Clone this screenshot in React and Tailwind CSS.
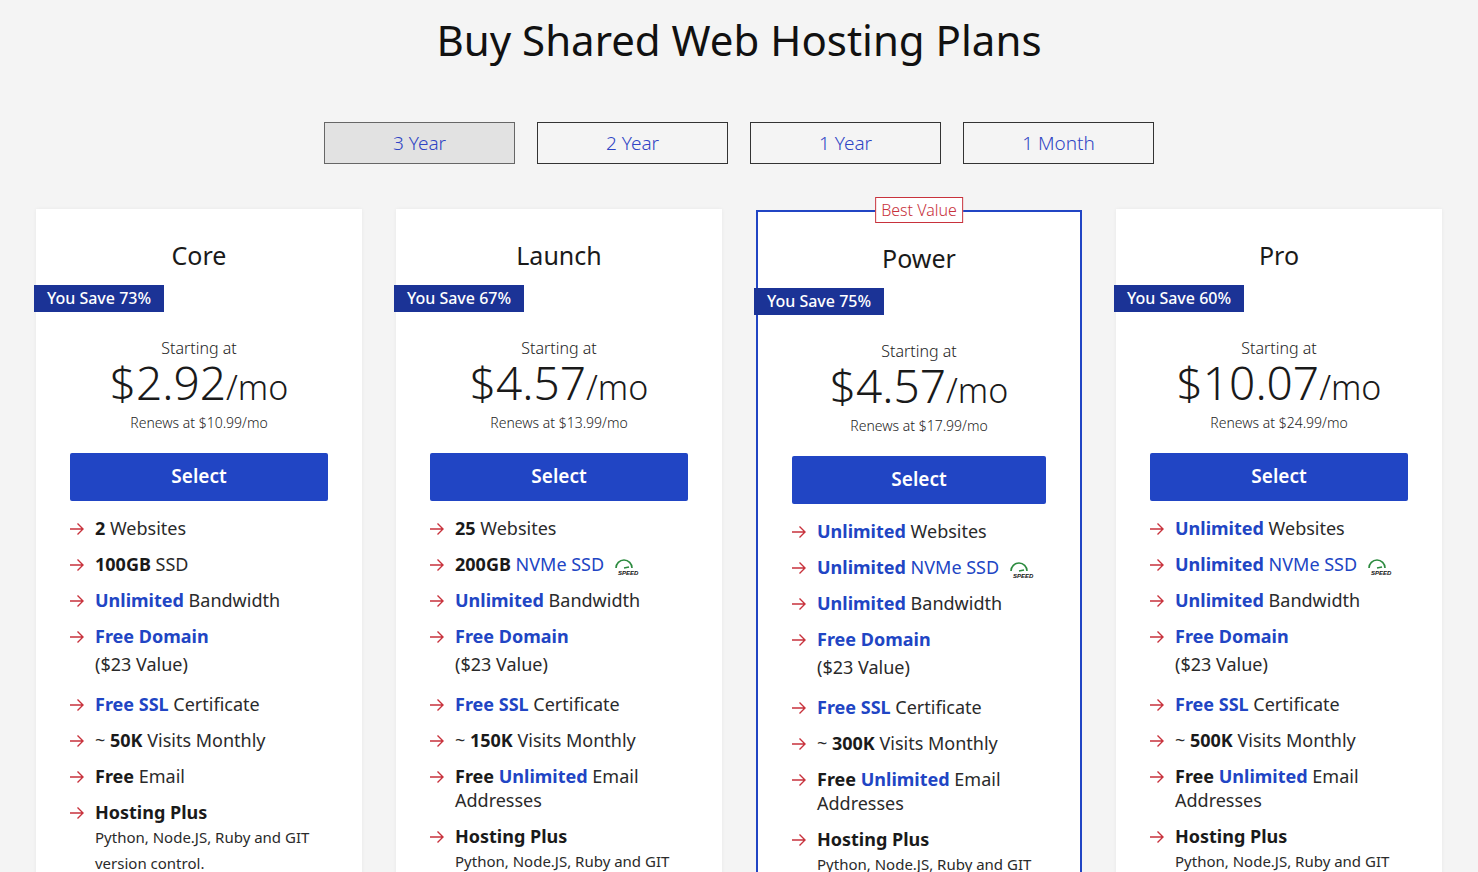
import React from 'react';

const plans = [
  { name: 'Core', save: '73%', price: '$2.92', renew: '$10.99', sites: '2', ssd: ['100GB', ' SSD', false], visits: '50K', email: 'basic', best: false },
  { name: 'Launch', save: '67%', price: '$4.57', renew: '$13.99', sites: '25', ssd: ['200GB', ' NVMe SSD', true], visits: '150K', email: 'unl', best: false },
  { name: 'Power', save: '75%', price: '$4.57', renew: '$17.99', sites: 'Unlimited', ssd: ['Unlimited', ' NVMe SSD', true], visits: '300K', email: 'unl', best: true },
  { name: 'Pro', save: '60%', price: '$10.07', renew: '$24.99', sites: 'Unlimited', ssd: ['Unlimited', ' NVMe SSD', true], visits: '500K', email: 'unl', best: false },
];

const Arrow = () => (
  <svg width="16" height="14" viewBox="0 0 16 14" className="shrink-0 mt-[6px]" fill="none" stroke="#c8323c" strokeWidth="1.4">
    <path d="M1 7h13M8.5 1.5L14 7l-5.5 5.5" />
  </svg>
);

const Speed = () => (
  <svg width="30" height="20" viewBox="0 0 30 20" className="inline-block ml-2 align-middle">
    <path d="M4 12a8 8 0 0 1 16 0" fill="none" stroke="#2b8a3e" strokeWidth="1.6" />
    <path d="M12 12l5-1" stroke="#2b8a3e" strokeWidth="1.4" />
    <text x="6" y="19" fontSize="6" fontStyle="italic" fontWeight="700" fill="#111" fontFamily="Liberation Sans">SPEED</text>
  </svg>
);

const Row = ({ children }) => (
  <li className="flex gap-[10px] items-start">
    <Arrow />
    <div>{children}</div>
  </li>
);

const B = 'font-bold text-[#2145c4]';

function Card({ p }) {
  const unl = (v) => (v === 'Unlimited' ? <span className={B}>Unlimited</span> : <span className="font-bold text-[#1a1a1a]">{v}</span>);
  return (
    <div className={`relative bg-white w-[326px] ${p.best ? 'border-2 border-[#2145c4] mt-[1px]' : 'shadow-[0_0_4px_rgba(0,0,0,0.05)]'}`}>
      {p.best && (
        <div className="absolute -top-[15px] left-1/2 -translate-x-1/2 bg-white border border-[#c8323c] text-[#c8323c] text-[16px] px-[5px] leading-[24px] font-['Inter',sans-serif] font-light">Best Value</div>
      )}
      <div className="font-['Inter',sans-serif] text-center pt-[28px] text-[25px] text-[#1a1a1a]">{p.name}</div>
      <div className={`${p.best ? '-ml-[4px]' : '-ml-[2px]'} mt-[10px] w-[130px] h-[27px] bg-[#1b3396] text-white text-[16px] font-medium font-['Inter',sans-serif] flex items-center justify-center`}>You Save {p.save}</div>
      <div className="font-['Inter',sans-serif] font-light text-center mt-[24px] text-[16px] text-[#222]">Starting at</div>
      <div className="font-['Inter',sans-serif] font-light text-center text-[#1a1a1a] leading-[44px]">
        <span className="text-[46px]">{p.price}</span><span className="text-[34px]">/mo</span>
      </div>
      <div className="font-['Inter',sans-serif] font-light text-center text-[14px] text-[#222] -mt-[2px] leading-[18px]">Renews at {p.renew}/mo</div>
      <div className="px-[34px] mt-[21px]">
        <button className="w-full h-[48px] rounded-[2px] bg-[#2145c4] text-white text-[19px] font-semibold font-['Inter',sans-serif]">Select</button>
      </div>
      <ul className="font-['Open_Sans',sans-serif] text-[18px] text-[#2a2a2a] px-[33px] pt-[15px] pb-[20px] flex flex-col gap-[12px] leading-[24px]">
        <Row>{unl(p.sites)} Websites</Row>
        <Row>{unl(p.ssd[0])}<span className={p.ssd[2] ? 'text-[#2145c4]' : ''}>{p.ssd[1]}</span>{p.ssd[2] && <Speed />}</Row>
        <Row><span className={B}>Unlimited</span> Bandwidth</Row>
        <Row><span className={B}>Free Domain</span><br /><span className="leading-[32px]">($23 Value)</span></Row>
        <Row><span className={B}>Free SSL</span> Certificate</Row>
        <Row>~ <span className="font-bold text-[#1a1a1a]">{p.visits}</span> Visits Monthly</Row>
        {p.email === 'basic' ? (
          <Row><span className="font-bold text-[#1a1a1a]">Free</span> Email</Row>
        ) : (
          <Row><span className="font-bold text-[#1a1a1a]">Free</span> <span className={B}>Unlimited</span> Email Addresses</Row>
        )}
        <Row><span className="font-bold text-[#1a1a1a]">Hosting Plus</span><div className="text-[15px] leading-[26px] max-w-[220px]">Python, Node.JS, Ruby and GIT version control.</div></Row>
      </ul>
    </div>
  );
}

export default function App() {
  const tabs = ['3 Year', '2 Year', '1 Year', '1 Month'];
  return (
    <div className="bg-[#f4f4f4] min-h-[872px] h-[872px] overflow-hidden">
      <h1 className="font-['Inter',sans-serif] text-center text-[42px] text-[#111] pt-[12px] leading-[56px]">Buy Shared Web Hosting Plans</h1>
      <div className="flex justify-center gap-[22px] mt-[54px]">
        {tabs.map((t, i) => (
          <div key={t} className={`w-[191px] h-[42px] flex items-center justify-center text-[19px] font-light text-[#2f44c4] font-['Inter',sans-serif] border ${i === 0 ? 'bg-[#e2e2e2] border-[#666]' : 'bg-[#f4f4f4] border-[#333]'}`}>{t}</div>
        ))}
      </div>
      <div className="flex justify-center gap-[34px] mt-[45px] items-start">
        {plans.map((p) => <Card key={p.name} p={p} />)}
      </div>
    </div>
  );
}
